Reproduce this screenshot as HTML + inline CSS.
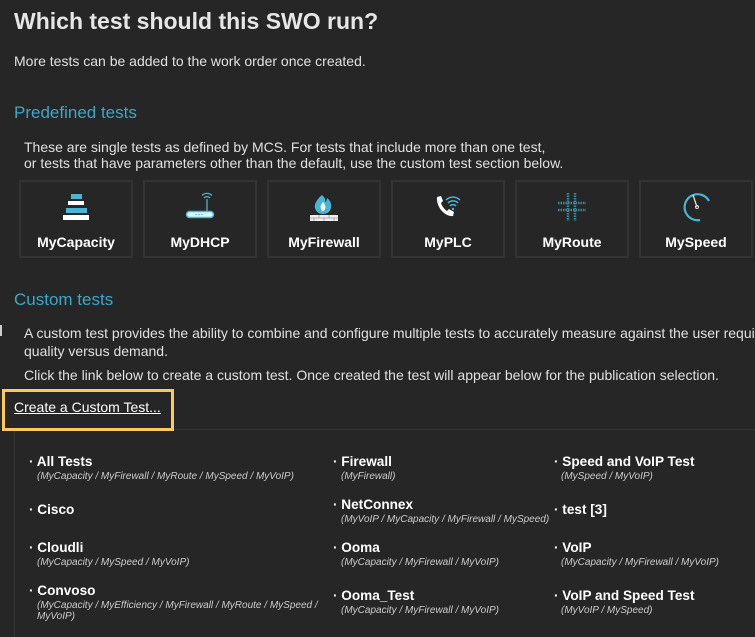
<!DOCTYPE html>
<html><head><meta charset="utf-8"><style>
*{margin:0;padding:0;box-sizing:border-box}
body{width:755px;height:637px;background:#262626;overflow:hidden;position:relative;font-family:"Liberation Sans",Arial,sans-serif;color:#e0e0e0}
.a{position:absolute;white-space:nowrap}
.tile{position:absolute;top:180px;width:114px;height:78px;border:2px solid #333}
.tl{position:absolute;top:243px;width:114px;text-align:center;font-weight:bold;font-size:14px;line-height:14px;margin-top:-8px;color:#fff}
.n{font-weight:bold;font-size:13.6px;color:#fff;line-height:15px}
.s{font-style:italic;font-size:10px;color:#ccc;line-height:11px}
</style></head><body>
<div class="a" style="left:14px;top:8px;font-size:23px;font-weight:bold;color:#e6e6e6">Which test should this SWO run?</div>
<div class="a" style="left:14px;top:53px;font-size:14px">More tests can be added to the work order once created.</div>
<div class="a" style="left:14px;top:103px;font-size:17px;color:#3aa8c8">Predefined tests</div>
<div class="a" style="left:24px;top:139px;font-size:14px;line-height:16px">These are single tests as defined by MCS. For tests that include more than one test,<br>or tests that have parameters other than the default, use the custom test section below.</div>

<div class="tile" style="left:19px"></div><div class="tile" style="left:143px"></div><div class="tile" style="left:267px"></div><div class="tile" style="left:391px"></div><div class="tile" style="left:515px"></div><div class="tile" style="left:639px"></div>
<div class="tl" style="left:19px">MyCapacity</div><div class="tl" style="left:143px">MyDHCP</div><div class="tl" style="left:267px">MyFirewall</div><div class="tl" style="left:391px">MyPLC</div><div class="tl" style="left:515px">MyRoute</div><div class="tl" style="left:639px">MySpeed</div>

<svg class="a" style="left:0;top:0" width="755" height="300">
<rect x="71" y="194" width="11" height="5" fill="#4ab4d4"/><rect x="68" y="201" width="16" height="4" fill="#fff"/><rect x="66" y="208" width="21" height="5" fill="#4ab4d4"/><rect x="63" y="215" width="26" height="5" fill="#fff"/>
<rect x="186.5" y="211.5" width="27" height="6" rx="3" fill="#dff" stroke="#4ab4d4" stroke-width="1.5"/><circle cx="196" cy="214.5" r=".8" fill="#4ab4d4"/><circle cx="199" cy="214.5" r=".8" fill="#4ab4d4"/><circle cx="202" cy="214.5" r=".8" fill="#4ab4d4"/>
<line x1="207" y1="199" x2="207" y2="211" stroke="#4ab4d4" stroke-width="1.3"/><path d="M204 198a4 4 0 0 1 6 0M202 195.5a7 7 0 0 1 10 0" stroke="#4ab4d4" stroke-width="1.3" fill="none"/>
<path d="M322 195c-5 4-8 9-7 13 1 4 4 6 8 6s7-2 8-6c1-4-1-8-4-10 0 2-1 4-2 4 1-3-1-5-3-7z" fill="#4ab4d4"/><path d="M323 202c-2 2-3 5-2 7 0 1 1 2 2 2s2-1 2-2c1-2 0-5-2-7z" fill="#fff"/>
<rect x="310" y="215" width="28" height="6" fill="#eee"/><path d="M310 218h28M319 215v3M329 215v3M314 218v3M324 218v3M334 218v3" stroke="#999" stroke-width=".7"/>
<path d="M437 197l4-1 2 5-2 2c1 3 3 6 6 8l2-2 5 3-1 4c-8 1-17-9-16-19z" fill="#fff"/>
<path d="M450 206a4 4 0 0 1 6 0M448 203a7 7 0 0 1 10 0M446 200a10 10 0 0 1 14 0" stroke="#4ab4d4" stroke-width="1.5" fill="none"/><circle cx="453" cy="209" r="1.2" fill="#4ab4d4"/>
<g stroke="#3a8aa0" stroke-width="2.5" stroke-dasharray="1.5 1"><line x1="568" y1="193" x2="568" y2="221"/><line x1="575" y1="193" x2="575" y2="221"/><line x1="558" y1="203" x2="586" y2="203"/><line x1="558" y1="210" x2="586" y2="210"/></g>
<path d="M709 201A13 13 0 1 0 700 220" stroke="#4ab4d4" stroke-width="2.2" fill="none"/><line x1="693" y1="195" x2="697" y2="207" stroke="#ddd" stroke-width="1.3"/><circle cx="697" cy="207" r="1.5" fill="none" stroke="#ddd"/>
</svg>

<div class="a" style="left:14px;top:290px;font-size:17px;color:#3aa8c8">Custom tests</div>
<div class="a" style="left:0;top:325px;width:2px;height:11px;background:#ccc"></div>
<div class="a" style="left:24px;top:324px;font-size:14px;line-height:18px">A custom test provides the ability to combine and configure multiple tests to accurately measure against the user requi<br>quality versus demand.</div>
<div class="a" style="left:24px;top:367px;font-size:14px">Click the link below to create a custom test. Once created the test will appear below for the publication selection.</div>
<div class="a" style="left:14px;top:429px;width:741px;height:208px;border-left:1px solid #363636;border-top:1px solid #363636"></div>
<div class="a" style="left:2px;top:389px;width:172px;height:42px;border:3px solid #ffc85a;background:#262626"></div>
<div class="a" style="left:14px;top:399px;font-size:14px;text-decoration:underline;color:#fff">Create a Custom Test...</div>

<div class="a" style="left:29px;top:453px"><span class="n">· All Tests</span><div class="s" style="margin-left:8px">(MyCapacity / MyFirewall / MyRoute / MySpeed / MyVoIP)</div></div>
<div class="a" style="left:29px;top:501px"><span class="n">· Cisco</span></div>
<div class="a" style="left:29px;top:539px"><span class="n">· Cloudli</span><div class="s" style="margin-left:8px">(MyCapacity / MySpeed / MyVoIP)</div></div>
<div class="a" style="left:29px;top:582px"><span class="n">· Convoso</span><div class="s" style="margin-left:8px">(MyCapacity / MyEfficiency / MyFirewall / MyRoute / MySpeed /<br>MyVoIP)</div></div>

<div class="a" style="left:333px;top:453px"><span class="n">· Firewall</span><div class="s" style="margin-left:8px">(MyFirewall)</div></div>
<div class="a" style="left:333px;top:496px"><span class="n">· NetConnex</span><div class="s" style="margin-left:8px">(MyVoIP / MyCapacity / MyFirewall / MySpeed)</div></div>
<div class="a" style="left:333px;top:539px"><span class="n">· Ooma</span><div class="s" style="margin-left:8px">(MyCapacity / MyFirewall / MyVoIP)</div></div>
<div class="a" style="left:333px;top:587px"><span class="n">· Ooma_Test</span><div class="s" style="margin-left:8px">(MyCapacity / MyFirewall / MyVoIP)</div></div>

<div class="a" style="left:554px;top:453px"><span class="n">· Speed and VoIP Test</span><div class="s" style="margin-left:7px">(MySpeed / MyVoIP)</div></div>
<div class="a" style="left:554px;top:501px"><span class="n">· test [3]</span></div>
<div class="a" style="left:554px;top:539px"><span class="n">· VoIP</span><div class="s" style="margin-left:7px">(MyCapacity / MyFirewall / MyVoIP)</div></div>
<div class="a" style="left:554px;top:587px"><span class="n">· VoIP and Speed Test</span><div class="s" style="margin-left:7px">(MyVoIP / MySpeed)</div></div>
</body></html>
